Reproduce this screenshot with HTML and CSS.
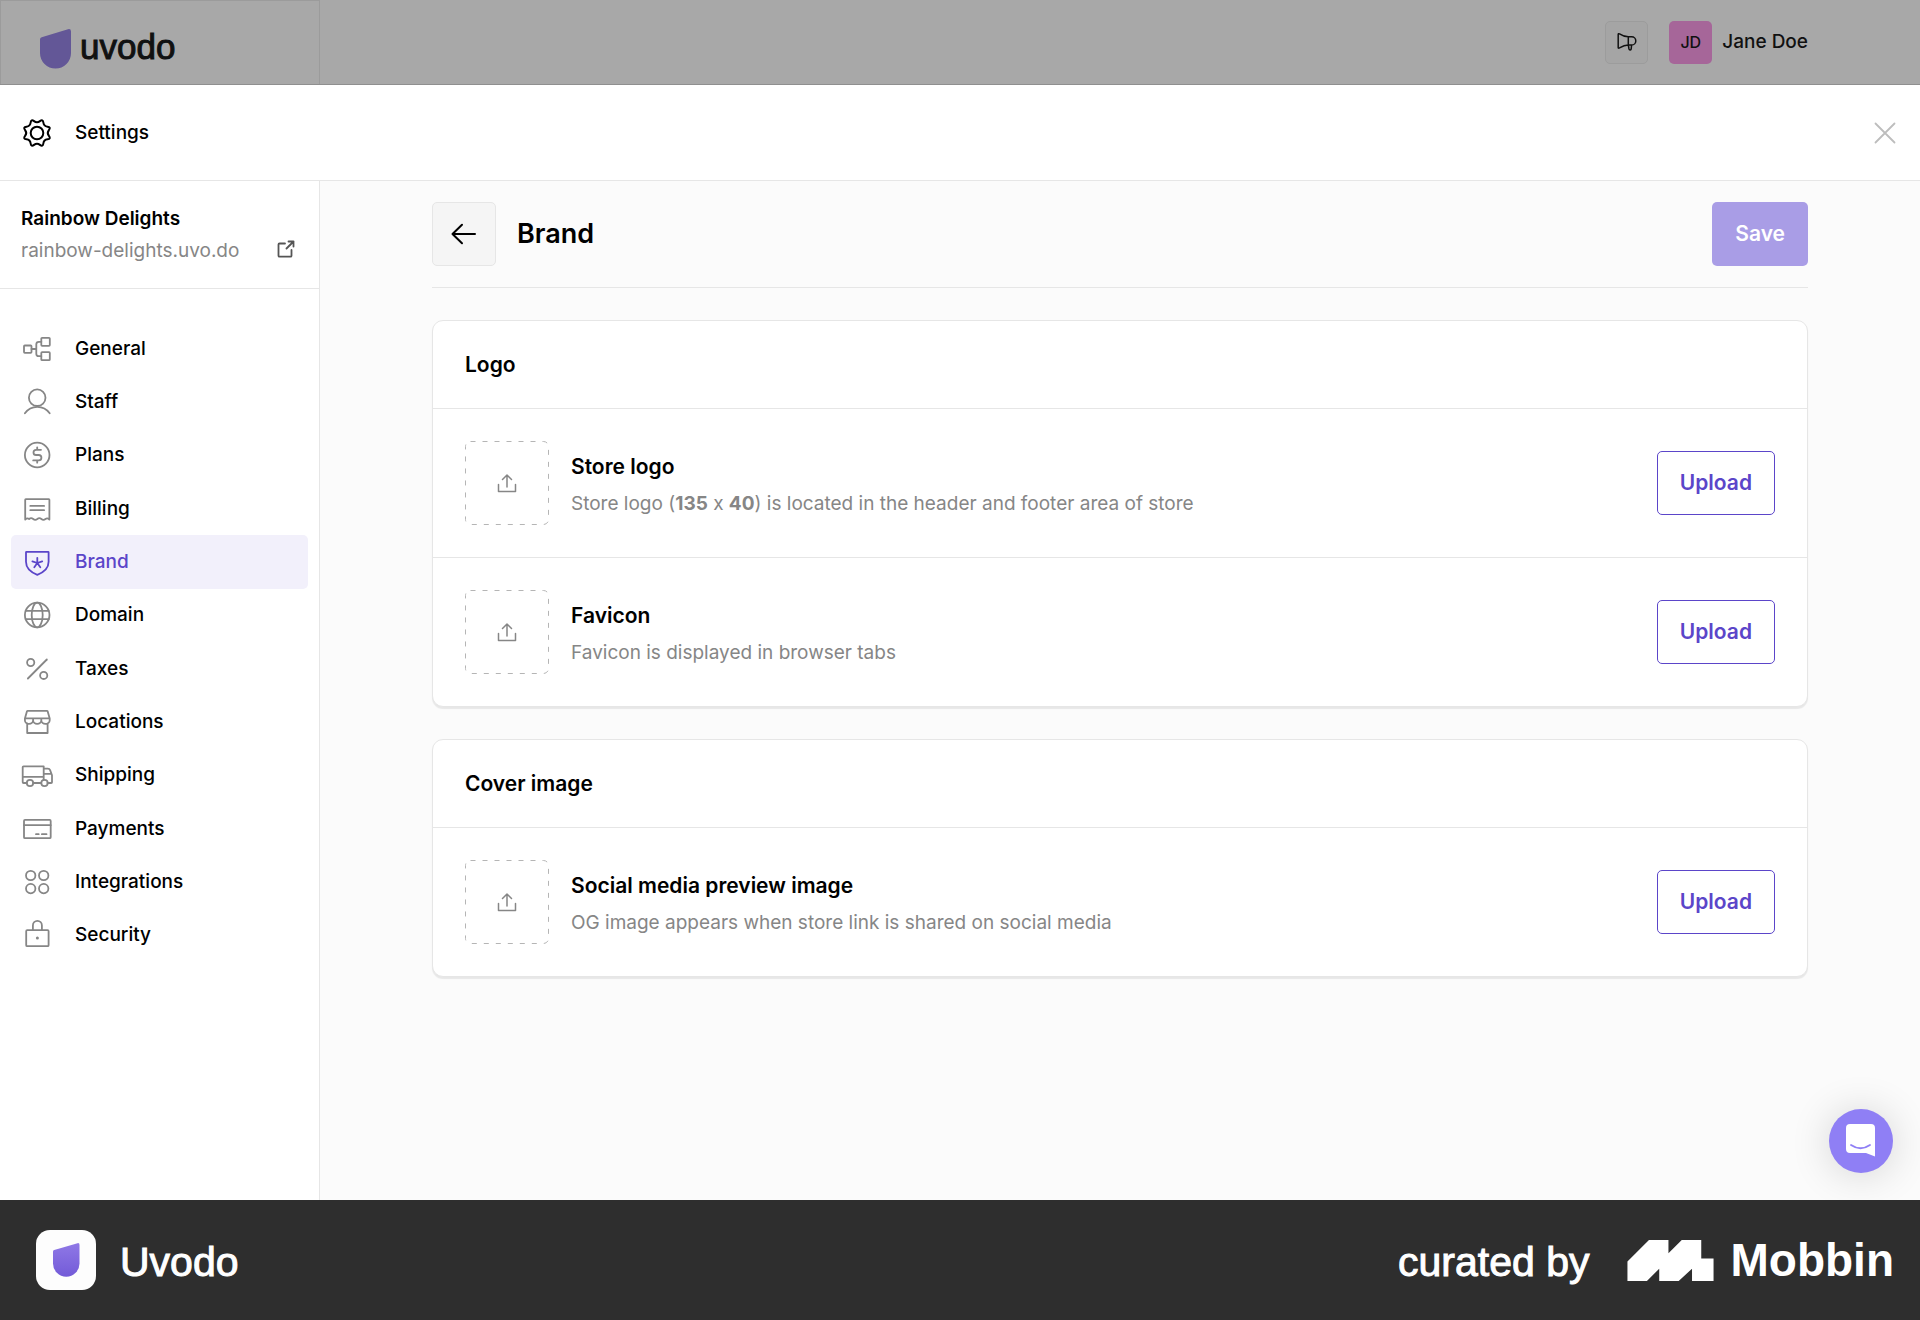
FILE: index.html
```html
<!DOCTYPE html>
<html lang="en">
<head>
  <meta charset="UTF-8" />
  <meta name="viewport" content="width=device-width, initial-scale=1.0" />
  <title>Brand – Settings – Uvodo</title>
  <link rel="stylesheet" href="styles.css">
</head>
<body>
  <header class="topbar">
    <a class="logo" href="#">
      <svg width="32" height="40" viewBox="0 0 32 40" aria-hidden="true"><path fill="#635797" d="M0 10.500Q0 8.700 1.700 8.200L28 .200Q31-.500 31 2.500V24a15.500 15.500 0 0 1-31 0z"/></svg>
      <span>uvodo</span>
    </a>
    <div class="account">
      <button class="news" type="button" aria-label="News">
        <svg class="line" width="20" height="20" viewBox="0 0 20 20"><path d="M1.200 2.500Q1.200 1.200 2.500 1.900C4.800 3.400 7.500 4.800 11.300 4.800V13C7.500 13 4.800 14.500 2.500 15.900Q1.200 16.600 1.200 15.500zM11.300 4.800h3.400a4.100 4.100 0 0 1 0 8.200H11.300M11.300 13l.7 4q.3 1 1.200.9.900-.100 1-1L14.600 13"/></svg>
      </button>
      <span class="avatar">JD</span>
      <span class="user">Jane Doe</span>
    </div>
  </header>

  <div class="panel-header">
    <svg class="line gear" width="32" height="32" viewBox="-16 -16 32 32" aria-hidden="true"><path d="M11.900-2.950Q9.600 0 11.900 2.950Q14.200 5.900 10.500 6.350Q6.800 6.800 6.350 10.500Q5.900 14.200 2.950 11.900Q0 9.600-2.950 11.900Q-5.900 14.200-6.350 10.500Q-6.800 6.800-10.500 6.350Q-14.200 5.900-11.900 2.950Q-9.600 0-11.900-2.950Q-14.200-5.900-10.500-6.350Q-6.800-6.800-6.350-10.500Q-5.900-14.200-2.950-11.900Q0-9.600 2.950-11.900Q5.900-14.200 6.350-10.500Q6.800-6.800 10.500-6.350Q14.200-5.900 11.900-2.950Z"/><circle r="6.300"/></svg>
    <span class="panel-title">Settings</span>
    <button class="close" type="button" aria-label="Close">
      <svg class="line" width="22" height="22" viewBox="0 0 22 22"><path d="M1.500 1.500l19 19M20.500 1.500l-19 19"/></svg>
    </button>
  </div>

  <div class="content">
    <aside class="sidebar">
      <div class="store">
        <div>
          <div class="store-name">Rainbow Delights</div>
          <div class="store-url">rainbow-delights.uvo.do</div>
        </div>
        <a class="open-store" href="#" aria-label="Open store">
          <svg class="line" width="18" height="18" viewBox="0 0 18 18"><path d="M8 3.500H2.500q-1 0-1 1V15.700q0 1 1 1H13.500q1 0 1-1V10M11.500 1.500h5v5M16.500 1.500L9.500 8.500"/></svg>
        </a>
      </div>
      <nav class="menu">
        <a href="#"><svg class="line" width="32" height="32" viewBox="0 0 32 32"><rect x="3" y="12.500" width="7.500" height="7.300" rx=".8"/><rect x="20.300" y="4.800" width="8.500" height="8" rx=".8"/><rect x="20.300" y="19.200" width="8.500" height="8" rx=".8"/><path d="M10.500 16h4.800M20.300 8.800h-2.500q-2.500 0-2.500 2.500v9.400q0 2.500 2.500 2.500h2.500"/></svg>General</a>
        <a href="#"><svg class="line" width="32" height="32" viewBox="0 0 32 32"><circle cx="16.200" cy="11.700" r="8.300"/><path d="M3.900 27.300a15.200 15.200 0 0 1 24.800 0"/></svg>Staff</a>
        <a href="#"><svg class="line" width="32" height="32" viewBox="0 0 32 32"><circle cx="16.200" cy="16" r="12.300"/><path d="M20 10.800h-4.900a2.600 2.600 0 0 0 0 5.200h2.600a2.700 2.700 0 0 1 0 5.400h-5.500M16.200 8.300v2.500M16.200 21.400v2.300"/></svg>Plans</a>
        <a href="#"><svg class="line" width="32" height="32" viewBox="0 0 32 32"><path d="M4.200 26.600V6.700q0-.6.600-.6h23q.600 0 .600.600v19.900q-2-2-3.900-.6-2.100 1.700-4.100 0-2.100-1.700-4.100 0-2.100 1.700-4.100 0-2.100-1.700-4.100 0-1.900-1.400-3.900.6zM9.300 12.900h13.800M9.300 17.200h13.800"/></svg>Billing</a>
        <a class="active" href="#" aria-current="page"><svg class="line" width="32" height="32" viewBox="0 0 32 32"><path d="M5.500 5.800h21.600q.5 0 .5.500v9.500c0 6-4.500 10.400-11.300 13C9.500 26.200 5 21.800 5 15.800V6.300q0-.5.500-.5zM16.300 17v-5.200M16.300 17l4.900-1.600M16.300 17l3 4.200M16.300 17l-3 4.200M16.300 17l-4.900-1.600"/></svg>Brand</a>
        <a href="#"><svg class="line" width="32" height="32" viewBox="0 0 32 32"><circle cx="16.200" cy="16" r="12.300"/><ellipse cx="16.200" cy="16" rx="5.500" ry="12.300"/><path d="M4.700 11.800h23M4.700 20.200h23"/></svg>Domain</a>
        <a href="#"><svg class="line" width="32" height="32" viewBox="0 0 32 32"><circle cx="9.700" cy="9.500" r="3.600"/><circle cx="22.700" cy="22.400" r="3.600"/><path d="M25.800 6.500L6.900 25.500"/></svg>Taxes</a>
        <a href="#"><svg class="line" width="32" height="32" viewBox="0 0 32 32"><path d="M6.500 4.800h19.400q.6 0 .8.600l2 7H3.900l2-7q0-.6.600-.6zM3.900 12.400v1.800a4.100 3.600 0 0 0 8.200 0 4.100 3.600 0 0 0 8.200 0 4.100 3.600 0 0 0 8.400 0v-1.800M12.100 12.400v1.800M20.300 12.400v1.800M6.200 17.500V27h20.400V17.500"/></svg>Locations</a>
        <a href="#"><svg class="line" width="32" height="32" viewBox="0 0 32 32"><path d="M5.700 24H2.500q-.8 0-.8-.8V8.100q0-.8.800-.8h20.200V21M1.700 17.800h21M12.200 24H20M22.700 9.700h4.200q1.600 0 2.200 1.500l1.900 5V23.200q0 .8-.8.800h-3.700M22.700 14.900h7.800"/><circle cx="9" cy="24" r="3.200"/><circle cx="23.500" cy="24" r="3.200"/></svg>Shipping</a>
        <a href="#"><svg class="line" width="32" height="32" viewBox="0 0 32 32"><rect x="3" y="6.900" width="26.700" height="18.300" rx="1"/><path d="M3 12.200h26.700M15 21.200h2.700M20.900 21.200h4.600"/></svg>Payments</a>
        <a href="#"><svg class="line" width="32" height="32" viewBox="0 0 32 32"><circle cx="9.700" cy="9.500" r="4.700"/><circle cx="22.700" cy="9.500" r="4.700"/><circle cx="9.700" cy="22.600" r="4.700"/><circle cx="22.700" cy="22.600" r="4.700"/></svg>Integrations</a>
        <a href="#"><svg class="line" width="32" height="32" viewBox="0 0 32 32"><rect x="5.200" y="11.200" width="22.400" height="16" rx="1"/><path d="M11.900 11.200V6.400a4.500 4.500 0 0 1 9 0v4.800"/><circle class="dot" cx="16.400" cy="19.100" r="1.500"/></svg>Security</a>
      </nav>
    </aside>

    <main class="main">
      <div class="page-header">
        <button class="back" type="button" aria-label="Back">
          <svg class="line" width="26" height="22" viewBox="0 0 26 22"><path d="M24 11H1.500M11 1.800L1.500 11l9.500 9.200"/></svg>
        </button>
        <h1>Brand</h1>
        <button class="save" type="button">Save</button>
      </div>

      <section class="card">
        <h2>Logo</h2>
        <div class="row">
          <svg class="thumb" width="84" height="84" viewBox="0 0 84 84" aria-hidden="true"><rect class="dashes" x=".5" y=".5" width="83" height="83" rx="5"/><path class="arrow" d="M33.500 43.500v7h17v-7M42 46V34.500M37.500 38.500l4.500-4.500 4.500 4.500"/></svg>
          <div class="info">
            <h3>Store logo</h3>
            <p>Store logo (<b>135</b> x <b>40</b>) is located in the header and footer area of store</p>
          </div>
          <button class="upload" type="button">Upload</button>
        </div>
        <div class="row">
          <svg class="thumb" width="84" height="84" viewBox="0 0 84 84" aria-hidden="true"><rect class="dashes" x=".5" y=".5" width="83" height="83" rx="5"/><path class="arrow" d="M33.500 43.500v7h17v-7M42 46V34.500M37.500 38.500l4.500-4.500 4.500 4.500"/></svg>
          <div class="info">
            <h3>Favicon</h3>
            <p>Favicon is displayed in browser tabs</p>
          </div>
          <button class="upload" type="button">Upload</button>
        </div>
      </section>

      <section class="card">
        <h2>Cover image</h2>
        <div class="row">
          <svg class="thumb" width="84" height="84" viewBox="0 0 84 84" aria-hidden="true"><rect class="dashes" x=".5" y=".5" width="83" height="83" rx="5"/><path class="arrow" d="M33.500 43.500v7h17v-7M42 46V34.500M37.500 38.500l4.500-4.500 4.500 4.500"/></svg>
          <div class="info">
            <h3>Social media preview image</h3>
            <p>OG image appears when store link is shared on social media</p>
          </div>
          <button class="upload" type="button">Upload</button>
        </div>
      </section>

      <button class="chat" type="button" aria-label="Open chat">
        <svg width="30" height="34" viewBox="0 0 30 34"><path fill="#fff" d="M4 0h21a4 4 0 0 1 4 4v28.500L20 29H4a4 4 0 0 1-4-4V4a4 4 0 0 1 4-4z"/><path fill="none" stroke="#8f7ff5" stroke-width="1.800" stroke-linecap="round" d="M5 21q9.500 6.500 19 0"/></svg>
      </button>
    </main>
  </div>

  <footer class="credit">
    <span class="app-icon">
      <svg width="27" height="34" viewBox="0 0 27 34" aria-hidden="true">
        <defs><linearGradient id="leaf" x1="0" y1="0" x2="0" y2="1"><stop offset="0" stop-color="#8f78e6"/><stop offset="1" stop-color="#735bd8"/></linearGradient></defs>
        <path fill="url(#leaf)" d="M0 8.500Q0 7.300 1.200 6.900L24.500.200Q26.500-.300 26.500 2V20.500a13.250 13.250 0 0 1-26.500 0z"/>
      </svg>
    </span>
    <span class="credit-name">Uvodo</span>
    <span class="credit-by">curated by</span>
    <svg class="mark" width="87" height="41" viewBox="0 0 84 40" aria-hidden="true"><path fill="#fff" d="M0 21L21 0h19v13L53 0h19v18h12v22H63V28L50 40H31V28L19 40H0z"/></svg>
    <span class="credit-brand">Mobbin</span>
  </footer>
</body>
</html>
```
FILE: styles.css
```css
* {
  box-sizing: border-box;
}

body {
  margin: 0;
  min-height: 100vh;
  display: flex;
  flex-direction: column;
  font-family: Inter, "Liberation Sans", sans-serif;
  font-size: 19px;
  line-height: 32px;
  color: #000;
  background: #fbfbfb;
}

a {
  color: inherit;
  text-decoration: none;
}

button {
  font: inherit;
  padding: 0;
  cursor: pointer;
  display: flex;
  align-items: center;
  justify-content: center;
}

h1, h2, h3, p {
  margin: 0;
}

svg {
  flex: none;
}

.line {
  fill: none;
  stroke: currentColor;
  stroke-width: 1.8;
  stroke-linecap: round;
  stroke-linejoin: round;
}

/* Top bar behind the settings panel */
.topbar {
  display: flex;
  justify-content: space-between;
  height: 85px;
  padding-right: 112px;
  background: #a8a8a8;
  border-bottom: 1px solid #8f8f8f;
  color: #111;
}

.logo {
  display: flex;
  align-items: center;
  gap: 8px;
  width: 320px;
  padding: 12px 0 0 39px;
  border: 1px solid #9b9b9b;
  border-bottom: 0;
  font: 35px/40px "Liberation Sans", sans-serif;
  -webkit-text-stroke: 1px #111;
}

.logo span {
  padding-bottom: 4px;
}

.account {
  display: flex;
  align-items: center;
  font-weight: 500;
}

.news, .avatar {
  width: 43px;
  height: 43px;
  border-radius: 5px;
}

.news {
  margin-right: 21px;
  background: #a5a5a5;
  border: 1px solid #9c9c9c;
  color: #111;
}

.news svg {
  stroke-width: 1.5;
}

.avatar {
  margin-right: 10px;
  background: #a66699;
  font-size: 16px;
  line-height: 43px;
  text-align: center;
}

/* Panel header */
.panel-header {
  display: flex;
  align-items: center;
  gap: 22px;
  height: 96px;
  padding: 0 24px 0 21px;
  background: #fff;
  border-bottom: 1px solid #e6e6e6;
  font-weight: 500;
}

.gear {
  stroke-width: 2;
}

.close {
  margin-left: auto;
  border: 0;
  background: none;
  color: #bdbdbd;
}

.content {
  flex: 1;
  display: flex;
}

/* Sidebar */
.sidebar {
  width: 320px;
  flex: none;
  background: #fff;
  border-right: 1px solid #e6e6e6;
}

.store {
  display: flex;
  align-items: flex-end;
  justify-content: space-between;
  padding: 22px 24px 21px 21px;
  border-bottom: 1px solid #e6e6e6;
}

.store-name {
  font-weight: 600;
}

.store-url {
  color: #868686;
}

.open-store {
  display: flex;
  padding-bottom: 9px;
  color: #555;
}

.menu {
  display: grid;
  grid-template-rows: repeat(12, 1fr);
  height: 640px;
  margin: 33px 11px;
}

.menu a {
  display: flex;
  align-items: center;
  gap: 22px;
  padding-left: 10px;
  border-radius: 5px;
  font-weight: 500;
}

.menu svg {
  color: #868686;
}

.menu .dot {
  fill: currentColor;
  stroke: none;
}

.menu .active {
  background: #f2f0fb;
}

.menu .active, .menu .active svg {
  color: #5b45c9;
}

/* Page */
.main {
  position: relative;
  flex: 1;
  padding: 21px 112px;
}

.page-header {
  display: flex;
  align-items: center;
  gap: 21px;
  margin-bottom: 32px;
  padding-bottom: 21px;
  border-bottom: 1px solid #e6e6e6;
}

.back {
  width: 64px;
  height: 64px;
  background: #f5f5f5;
  border: 1px solid #e6e6e6;
  border-radius: 5px;
}

.back svg {
  stroke-width: 2;
}

h1 {
  font-size: 27px;
  font-weight: 600;
}

.save {
  margin-left: auto;
  height: 64px;
  padding: 0 23px;
  border: 0;
  border-radius: 5px;
  background: #a99de6;
  color: #fff;
  font-size: 21px;
  font-weight: 600;
}

.card {
  margin-bottom: 32px;
  background: #fff;
  border: 1px solid #e6e6e6;
  border-radius: 11px;
  box-shadow: 0 2px 1px rgba(0, 0, 0, 0.08);
}

.card h2 {
  padding: 28px 32px 27px;
  font-size: 21px;
  font-weight: 600;
}

.row {
  display: flex;
  align-items: center;
  gap: 22px;
  padding: 32px;
  border-top: 1px solid #e6e6e6;
}

.dashes {
  fill: none;
  stroke: #b5b5b5;
  stroke-dasharray: 5 7;
}

.arrow {
  fill: none;
  stroke: #868686;
  stroke-width: 1.5;
  stroke-linecap: round;
  stroke-linejoin: round;
}

.info {
  flex: 1;
}

.info h3 {
  font-size: 21px;
  font-weight: 600;
  line-height: 42px;
}

.info p {
  color: #868686;
}

.upload {
  height: 64px;
  padding: 0 22px;
  border: 1px solid #5b45c9;
  border-radius: 5px;
  background: #fff;
  color: #5b45c9;
  font-size: 21px;
  font-weight: 600;
}

.chat {
  position: absolute;
  right: 27px;
  bottom: 27px;
  width: 64px;
  height: 64px;
  border: 0;
  border-radius: 50%;
  background: #8f7ff5;
  box-shadow: 0 2px 40px rgba(0, 0, 0, 0.16);
}

/* Credit strip */
.credit {
  position: relative;
  display: flex;
  align-items: center;
  height: 120px;
  padding: 0 26px 0 36px;
  background: #2e2e2e;
  color: #fff;
  font: 41px/48px "Liberation Sans", sans-serif;
  -webkit-text-stroke: 1px #fff;
}

.credit-name, .credit-by {
  padding-top: 3px;
}

.app-icon {
  display: flex;
  align-items: center;
  justify-content: center;
  width: 60px;
  height: 60px;
  margin-right: 24px;
  border-radius: 14px;
  background: #fdfdfd;
}

.credit-by {
  margin-left: auto;
}

.mark {
  margin: 0 17px 0 37px;
}

.credit-brand {
  font-size: 46px;
  font-weight: 700;
  -webkit-text-stroke: 0;
}
```
